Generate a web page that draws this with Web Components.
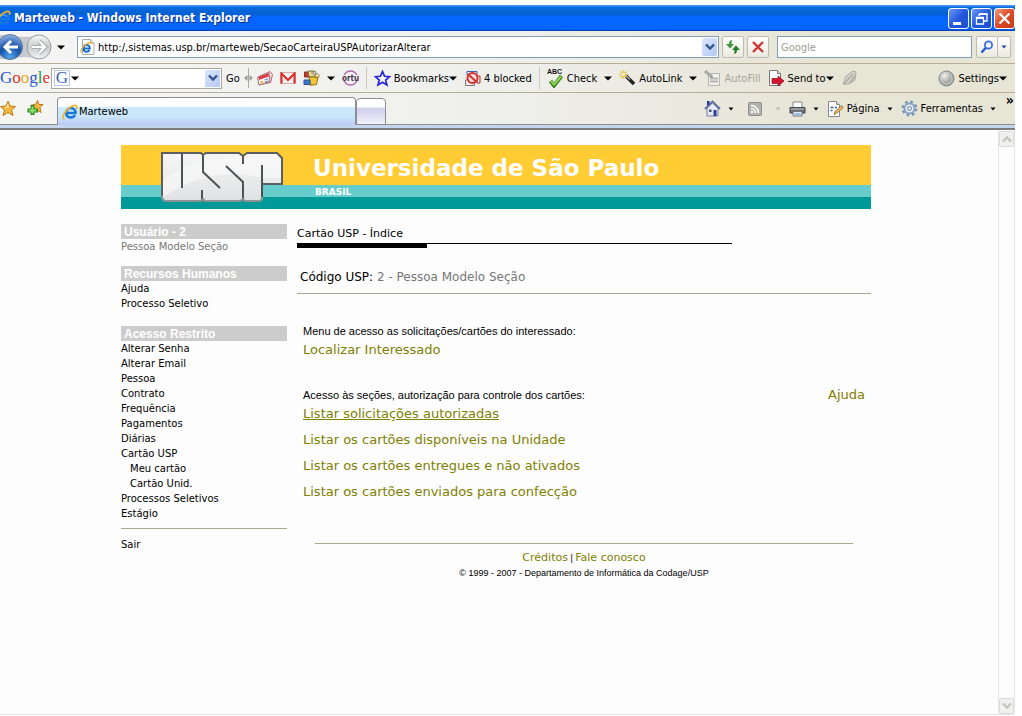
<!DOCTYPE html>
<html lang="pt-BR">
<head>
<meta charset="utf-8">
<title>Marteweb</title>
<style>
  html, body { margin: 0; height: 100%; background: #fff; }
  body { font-family: "DejaVu Sans", Verdana, sans-serif; font-size: 10px; color: #000; }
</style>
</head>
<body>
<browser-window>
  <window-title slot="title">Marteweb - Windows Internet Explorer</window-title>
  <address-bar slot="bars"></address-bar>
  <google-toolbar slot="bars"></google-toolbar>
  <tab-bar slot="bars">Marteweb</tab-bar>
  <usp-page></usp-page>
</browser-window>

<script>
const ICONS = {
  ie: [16, 16, `<path d="M4 9h9.500c.4-6.500-9.300-6.500-9.300 0 0 5.500 7 5.500 8.800 2" fill="none" stroke="#1a78dc" stroke-width="2.600"/><path d="M5.500 6.800c1-2 5-2.200 6 0" fill="none" stroke="#7cc4f8" stroke-width=".8"/><path d="M2.600 15C-1.800 14.500 4 4.500 11 1.800c3-1 4.600.4 3.300 3" fill="none" stroke="#edb52a" stroke-width="1.700"/>`],
  pageie: [16, 16, `<path d="M2.500.5h8l3.500 3.500v11.500H2.500z" fill="#fff" stroke="#a9aaa8"/><path d="M10.500.5v3.500h3.500" fill="#ddd" stroke="#a9aaa8"/><path d="M3.500 9.500h6.300c.3-4.600-6.300-4.600-6.300 0 0 4 4.800 4 6 1.500" fill="none" stroke="#1c6fd0" stroke-width="2"/><path d="M1.500 13.600C-.8 12 4 5 9.500 3.600c1.500-.4 2 .4 1.500 1.400" fill="none" stroke="#e9b32a" stroke-width="1.300"/>`],
  nav: [52, 28, `<defs><radialGradient id="b" cx=".5" cy=".9" r=".9"><stop offset="0" stop-color="#4fa6ee"/><stop offset=".5" stop-color="#1750a8"/><stop offset="1" stop-color="#8fb4e2"/></radialGradient><linearGradient id="g" x2="0" y2="1"><stop offset="0" stop-color="#fafafa"/><stop offset=".5" stop-color="#c9cbcc"/><stop offset="1" stop-color="#f2f2f2"/></linearGradient></defs><path d="M0 2h12q12 4 26 0v24q-14-4-26 0H0z" fill="#c5c9cf"/><circle cx="10" cy="14" r="12.500" fill="url(#b)" stroke="#69788e"/><circle cx="39" cy="14" r="12" fill="url(#g)" stroke="#979b9f"/><path d="M11 8l-6 6 6 6M5 14h13" fill="none" stroke="#fff" stroke-width="3"/><path d="M39 8l6 6-6 6M45 14H32" fill="none" stroke="#8e9090" stroke-width="4"/><path d="M39 8l6 6-6 6M45 14H32" fill="none" stroke="#fff" stroke-width="2.500"/>`],
  down: [8, 5, `<path d="M0 .5h8L4 4.500z" fill="currentColor"/>`],
  downs: [6, 4, `<path d="M.5.500h5L3 3.500z" fill="currentColor"/>`],
  chev: [10, 8, `<path d="M1 1.500l4 4 4-4" fill="none" stroke="currentColor" stroke-width="2.400"/>`],
  chevup: [10, 8, `<path d="M1 6.500l4-4 4 4" fill="none" stroke="currentColor" stroke-width="2.400"/>`],
  refresh: [16, 16, `<path d="M7 1C4.500 1.500 4 3 4 5H1l4 4.500L9 5H6.500c0-1.500 0-2.500.5-4z" fill="#3d963d"/><path d="M9 15c2.500-.5 3-2 3-4h3l-4-4.500L7 11h2.500c0 1.500 0 2.500-.5 4z" fill="#237c25"/>`],
  stop: [14, 14, `<path d="M2 2l10 10M12 2L2 12" stroke="#cf3434" stroke-width="2.400"/>`],
  search: [14, 14, `<path d="M1.500 12.500l5-5.500" stroke="#2459c5" stroke-width="2.400"/><circle cx="8.500" cy="5" r="3.600" fill="#eef6ff" stroke="#3b70d8" stroke-width="1.800"/>`],
  min: [19, 19, `<path d="M4 13h8v3H4z" fill="#fff"/>`],
  restore: [19, 19, `<path d="M7 5h8v7h-3M7 5v2M4.500 8.500h7v6.500h-7z" fill="none" stroke="#fff" stroke-width="1.300"/><path d="M4 8h8v2H4zM7 4.500h8.500v1.500H7z" fill="#fff"/>`],
  close: [19, 19, `<path d="M4.500 4.500l10 10M14.500 4.500l-10 10" stroke="#fff" stroke-width="2.300"/>`],
  grip: [9, 20, `<path d="M4.500 0v20" stroke="#aaa"/><path d="M3.500 7v6L0 10zM5.500 7v6L9 10z" fill="#999"/>`],
  news: [17, 16, `<path d="M2 7L14 1.500l2.500 3-2 8L3 15z" fill="#f3dfdf" stroke="#b6636c"/><path d="M1.500 7.500L13 3l1 8.500L3 15z" fill="#fff" stroke="#a27478"/><path d="M2.500 7l10-3.500.5 3-10 3.500z" fill="#db3e44"/><path d="M4 11.500l3-1 .5 2-3 1z" fill="#e8b53a"/><path d="M8.500 10l4-1.300M9 12l3.500-1.200" stroke="#5b78c0"/>`],
  gmail: [16, 12, `<path d="M.5.500h15v11H.5z" fill="#f8f4f2" stroke="#d8a8a2"/><path d="M1 11l5.500-6M15 11L9.500 5" stroke="#d9c4c0"/><path d="M1.500 11.500V1.500L8 8l6.500-6.500v10" fill="none" stroke="#d42e2a" stroke-width="2"/>`],
  gadgets: [17, 16, `<path d="M1.500 2h5v5h-5z" fill="#d23b2d" stroke="#7d3428"/><path d="M5 1h6l2 2-2 4H6z" fill="#ebdd92" stroke="#80733a"/><path d="M9 1l1.500 2 2-2 .5 3H9z" fill="#fff" stroke="#555" stroke-width=".6"/><path d="M6 7h9l-1.500 7.500-6 .8z" fill="#f2c62e" stroke="#8c6d1a"/><circle cx="14" cy="6" r="2.200" fill="none" stroke="#a58524"/><path d="M1 10h6v4.500H1z" fill="#3979cc" stroke="#2a5390"/>`],
  ortu: [17, 16, `<circle cx="8.500" cy="8" r="7" fill="#f5f0f7" stroke="#b26aa9" stroke-width="1.300"/><path d="M0 5h17v6H0z" fill="#f4f1f4"/><text x="8.500" y="11" text-anchor="middle" font-family="DejaVu Sans Condensed, sans-serif" font-size="8" font-weight="bold" fill="#463650">ortu</text>`],
  star: [17, 17, `<path d="M8.500 1.500l2 4.800 5 .4-3.900 3.300 1.300 5-4.400-2.700L4 15l1.300-5L1.500 6.700l5-.4z" fill="#fff" stroke="#2424e0" stroke-width="1.700"/>`],
  blocked: [17, 17, `<path d="M3 1.500h10v3H3z" fill="#d9e7fa" stroke="#3b5ea5"/><path d="M1.500 10h9v5.500h-9z" fill="#f5f1ef" stroke="#777"/><path d="M13 6h3v7h-3z" fill="#f3e6e2" stroke="#a33"/><circle cx="8.500" cy="8" r="5" fill="#fbe4e2" stroke="#d92e2b" stroke-width="2"/><path d="M5 5l7 6.500" stroke="#d92e2b" stroke-width="2"/>`],
  check: [17, 20, `<text x="0" y="6" font-family="Liberation Sans, sans-serif" font-size="7" font-weight="bold" fill="#111">ABC</text><path d="M3.500 13l3.500 4.500L14.500 8" fill="none" stroke="#3a7a1d" stroke-width="4"/><path d="M4 13l3 3.500L14 8.500" fill="none" stroke="#8ed455" stroke-width="2.200"/>`],
  wand: [17, 16, `<path d="M6 5l9 9" stroke="#222" stroke-width="3.600"/><path d="M6 4.500l5 5" stroke="#a5a5a5" stroke-width="1.500"/><path d="M4.500 0v9M0 4.500h9M1.500 1.500l6 6M7.500 1.500l-6 6" stroke="#edbd4b" stroke-width="1.200"/><circle cx="4.500" cy="4.500" r="1.700" fill="#fff5c4"/>`],
  fill: [17, 16, `<path d="M4.500 3.500h11v12h-11z" fill="#f1f1ee" stroke="#b4b4ae"/><path d="M6 8.500h8M6 11.500h8" stroke="#b4b4ae" stroke-width="2"/><path d="M1 1l7 6" stroke="#aaa" stroke-width="3"/><path d="M9 8L6.500 7l1.500-1.800z" fill="#888"/>`],
  send: [17, 16, `<path d="M1.500.5h8l3 3v12h-11z" fill="#fff" stroke="#777"/><path d="M9.500.500v3h3" fill="#ddd" stroke="#777"/><path d="M4 8.500h6V6l6 5-6 5v-2.500H4z" fill="#d5152f" stroke="#8a1020" stroke-width=".7"/>`],
  pen: [17, 16, `<path d="M2 14L5 6 12 1l3 1-1 8-6 4z" fill="#cfcdc4" stroke="#b0aea5"/><path d="M3 14L12 4M9 13l5-7" stroke="#96948c"/>`],
  orb: [17, 17, `<defs><radialGradient id="o" cx=".35" cy=".3"><stop offset="0" stop-color="#f4f4f2"/><stop offset="1" stop-color="#a4a4a0"/></radialGradient></defs><circle cx="8.500" cy="8.500" r="7.500" fill="url(#o)" stroke="#868683"/><circle cx="8.500" cy="8.500" r="5.500" fill="none" stroke="#d0d0cc"/>`],
  fav: [17, 17, `<path d="M8 1l2 5 5.500.5-4 3.500 1.500 5.500-5-3-5 3L4.500 10l-4-3.500L6 6z" fill="#f6b73c" stroke="#b97b1d"/><path d="M8 3l1 4-4 2L6 6.500z" fill="#ffe49a"/>`],
  favadd: [17, 16, `<path d="M10.500.500l1.500 4h4l-3 3 1 5-3.500-2-4 2 1-5-3-2.500 4-.5z" fill="#f6b73c" stroke="#b97b1d"/><path d="M3.500 5h4v3.500H11v4H7.500V15h-4v-2.500H.5v-4h3z" fill="#2f8a24"/><path d="M5.500 6.500v7M2 10.500h7.500" stroke="#8fe070" stroke-width="2"/>`],
  home: [17, 17, `<path d="M3 8v8h11V8L8.500 3z" fill="#e6e9f2" stroke="#77809c"/><path d="M1 9l7.500-7.500L16 9" fill="none" stroke="#606c9b" stroke-width="1.800"/><path d="M3 1h2.500v3L3 6z" fill="#2b2f95"/><path d="M9.500 10h3v6h-3z" fill="#2f3c94"/><path d="M5 9.500h2.500V12H5z" fill="#4b5474"/>`],
  rss: [14, 14, `<rect x=".5" y=".5" width="13" height="13" rx="1.500" fill="#b2b2ae" stroke="#8f8f8b"/><circle cx="4" cy="10" r="1.300" fill="#fff"/><path d="M3 6.500a4.500 4.500 0 0 1 4.500 4.500M3 3.500A7.500 7.500 0 0 1 10.500 11" fill="none" stroke="#fff" stroke-width="1.500"/>`],
  print: [17, 16, `<path d="M4 1h9v6H4z" fill="#fff" stroke="#888"/><path d="M1 6.500h15V12H1z" fill="#6d6f74" stroke="#45464a"/><path d="M2 8h13" stroke="#a9abb0" stroke-width="1.500"/><path d="M4 10.500h9V15H4z" fill="#dbe9fb" stroke="#777"/><path d="M5.500 13h6" stroke="#538bd0"/>`],
  page: [17, 16, `<path d="M1.500.500h8l3 3v12h-11z" fill="#fff" stroke="#888"/><path d="M9.500.500v3h3" fill="#ddd" stroke="#888"/><path d="M3.500 6.500h3M3.500 9.500h2M8 6.500h2" stroke="#3a63b8" stroke-width="1.500"/><path d="M7 13.500l1-3 6.500-6 1.800 2-6.800 6z" fill="#efb65a" stroke="#8c6736" stroke-width=".8"/>`],
  gear: [17, 17, `<circle cx="8.500" cy="8.500" r="6.500" fill="none" stroke="#7b97b6" stroke-width="3" stroke-dasharray="2.600 2.500"/><circle cx="8.500" cy="8.500" r="5" fill="#e6eef7" stroke="#88a3c2" stroke-width="2"/><circle cx="8.500" cy="8.500" r="2" fill="#eceadf" stroke="#6b87a9"/>`],
  usp: [122, 51, `<defs><linearGradient id="m" x2="0" y2="1"><stop offset="0" stop-color="#f6f6f6"/><stop offset="1" stop-color="#e0e1e2"/></linearGradient></defs><path d="M1 1h39l2 2 3-2h33l4 3 4-3h30l5 5v26h-19v13q0 4-3 4H84l-2-2-3 2H44l-2-2-2 2H5q-4 0-4-5z" fill="url(#m)"/><path d="M1 28Q30 6 80 6h40v20h-19q-50-14-100 20z" fill="#fafafa" opacity=".6"/><path d="M21 1v35M42 2v18l17 16M41 38v10M65 14l17 16v18M82 3v9M101 13v32" fill="none" stroke="#4e5355" stroke-width="2"/><path d="M101 32h20V6l-5-5H86l-4 3-4-3H45l-3 2-2-2H1v43" fill="none" stroke="#5a5f60" stroke-width="2"/><path d="M1 44q0 5 4 5h35l2-2 2 2h35l3-2 2 2h14q3 0 3-4" fill="none" stroke="#8b9394" stroke-width="2"/>`]
};

const component = (name, css, html) => {
  const template = document.createElement('template');
  template.innerHTML = `<style>:host{box-sizing:border-box}*{box-sizing:border-box}${css}</style>${html}`;
  customElements.define(name, class extends HTMLElement {
    constructor() {
      super();
      this.attachShadow({ mode: 'open' }).append(template.content.cloneNode(true));
    }
  });
};

customElements.define('ui-icon', class extends HTMLElement {
  constructor() { super(); this.attachShadow({ mode: 'open' }); }
  connectedCallback() {
    const [w, h, art] = ICONS[this.getAttribute('name')];
    this.shadowRoot.innerHTML = `<style>:host{display:block;flex:none}svg{display:block}</style><svg width="${w}" height="${h}" viewBox="0 0 ${w} ${h}" aria-hidden="true">${art}</svg>`;
  }
});

customElements.define('tool-button', class extends HTMLElement {
  constructor() { super(); this.attachShadow({ mode: 'open' }); }
  connectedCallback() {
    const icon = this.getAttribute('icon');
    const arrow = this.getAttribute('arrow');
    const off = this.hasAttribute('disabled');
    this.shadowRoot.innerHTML = `<style>
      :host { display: block; flex: none; }
      button { display: flex; align-items: center; gap: 3px; border: 0; padding: 0; margin: 0; background: none; font: inherit; color: #000; white-space: nowrap; }
      button:disabled { color: #a6a497; }
      .far { margin-left: 4px; }
      .near { margin-left: -3px; }
      .dim { color: #bbb; margin-left: 10px; }
    </style><button type="button" ${off ? 'disabled' : ''} aria-label="${this.getAttribute('label') || this.textContent}">${icon ? `<ui-icon name="${icon}"></ui-icon>` : ''}<slot></slot>${arrow ? `<ui-icon class="${arrow}" name="${this.hasAttribute('small') ? 'downs' : 'down'}"></ui-icon>` : ''}</button>`;
  }
});

component('browser-window', `
  :host { display: flex; flex-direction: column; min-height: 100%; padding: 5px 7px 1px 0; }
  .bars { background: linear-gradient(to right, #f5f5f4, #efefec 50%, #e7e5d6 80%); font: 11px "DejaVu Sans Condensed", Tahoma, sans-serif; }
  .view { flex: 1; display: flex; border-top: 2px solid #7c7c7c; border-bottom: 1px solid #e2e2e2; background: #fdfdfd; }
  .body { flex: 1; min-width: 0; padding-right: 6px; }
`, `<slot name="title"></slot><div class="bars"><slot name="bars"></slot></div>
<div class="view"><div class="body"><slot></slot></div><scroll-track></scroll-track></div>`);

component('window-title', `
  :host { display: flex; align-items: center; height: 26px; color: #fff; background: linear-gradient(#3f95f8 0 1px, #0a6ce0 2px, #0560cf 9px, #0466ff 12px 24px, #0038b0); }
  h1 { flex: 1; margin: 0 0 0 3px; font: bold 12px "DejaVu Sans Condensed", "Trebuchet MS", sans-serif; text-shadow: 1px 1px #0a2f8a; white-space: nowrap; }
  .app { margin-left: -5px; }
  .ctl { display: flex; gap: 2px; }
  button { width: 21px; height: 21px; padding: 0; border: 1px solid #fff; border-radius: 3px; background: linear-gradient(135deg, #6f9bf5, #2358dd 50%, #1d4fd0); }
  button.close { background: linear-gradient(135deg, #f09a80, #dd4a26 50%, #c33a15); }
`, `<ui-icon class="app" name="ie"></ui-icon><h1><slot></slot></h1>
<div class="ctl"><button type="button" aria-label="Minimizar"><ui-icon name="min"></ui-icon></button><button type="button" aria-label="Restaurar"><ui-icon name="restore"></ui-icon></button><button class="close" type="button" aria-label="Fechar"><ui-icon name="close"></ui-icon></button></div>`);

component('address-bar', `
  :host { display: flex; align-items: center; height: 33px; padding-right: 4px; border-bottom: 1px solid #b9ad98; }
  .hist { margin: 0 12px 0 5px; }
  .box { display: flex; align-items: center; height: 22px; border: 1px solid #7f9db9; background: #fff; }
  .url { flex: 1; padding: 0 1px 0 2px; gap: 2px; }
  input { flex: 1; min-width: 0; border: 0; padding: 0; outline: 0; background: none; font: inherit; color: #000; }
  input::placeholder { color: #a09e92; opacity: 1; }
  button { display: flex; align-items: center; justify-content: center; padding: 0; height: 22px; border: 1px solid #bdbcb2; border-radius: 2px; background: linear-gradient(#fff, #eceade); }
  .drop { width: 15px; height: 18px; border: 0; background: linear-gradient(135deg, #dce7fd, #b4c8f5); color: #35538f; }
  .sq { width: 22px; margin-left: 3px; }
  .find { width: 195px; margin: 0 4px 0 8px; padding-left: 3px; }
  .go { width: 22px; } .more { width: 14px; margin-left: -1px; color: #234aa0; }
`, `<ui-icon name="nav"></ui-icon><ui-icon class="hist" name="down"></ui-icon>
<div class="box url"><ui-icon name="pageie"></ui-icon><input aria-label="Endereço" value="http:/,sistemas.usp.br/marteweb/SecaoCarteiraUSPAutorizarAlterar"><button class="drop" type="button" aria-label="Endereços"><ui-icon name="chev"></ui-icon></button></div>
<button class="sq" type="button" aria-label="Atualizar"><ui-icon name="refresh"></ui-icon></button>
<button class="sq" type="button" aria-label="Parar"><ui-icon name="stop"></ui-icon></button>
<div class="box find"><input aria-label="Pesquisar" placeholder="Google"></div>
<button class="go" type="button" aria-label="Buscar"><ui-icon name="search"></ui-icon></button><button class="more" type="button" aria-label="Opções de busca"><ui-icon name="downs"></ui-icon></button>`);

component('google-toolbar', `
  :host { display: flex; align-items: center; height: 29px; padding-right: 8px; border-bottom: 1px solid #b9ad98; white-space: nowrap; }
  .logo { width: 51px; font: 17px "Liberation Serif", serif; color: #2a5bd0; }
  .logo .r { color: #d6322b; } .logo .y { color: #e3a81b; } .logo .g { color: #249a3c; }
  .box { display: flex; align-items: center; width: 171px; height: 21px; padding: 0 1px 0 2px; border: 1px solid #a8a89c; background: #fff; gap: 1px; }
  .g0 { display: block; width: 16px; height: 16px; border: 1px solid #b9c6e4; font: 17px/14px "Liberation Serif", serif; text-align: center; color: #3a5ec0; }
  input { flex: 1; min-width: 0; border: 0; padding: 0; outline: 0; font: inherit; background: none; }
  .drop { display: flex; align-items: center; justify-content: center; width: 15px; height: 17px; padding: 0; border: 0; background: linear-gradient(135deg, #dce7fd, #b4c8f5); color: #35538f; }
  .items { flex: 1; display: flex; align-items: center; gap: 7px; margin-left: 4px; }
  .grip { margin: 0 -4px 0 -3px; }
  i { width: 1px; height: 22px; background: #cbc8b8; }
  .push { margin-left: auto; }
`, `<span class="logo">G<span class="r">o</span><span class="y">o</span>g<span class="g">l</span><span class="r">e</span></span>
<div class="box"><span class="g0">G</span><ui-icon name="down"></ui-icon><input aria-label="Pesquisa Google"><button class="drop" type="button" aria-label="Histórico"><ui-icon name="chev"></ui-icon></button></div>
<div class="items">
<tool-button>Go</tool-button><ui-icon class="grip" name="grip"></ui-icon>
<tool-button icon="news" label="Notícias"></tool-button><tool-button icon="gmail" label="Gmail"></tool-button><tool-button icon="gadgets" arrow="far" label="Gadgets"></tool-button><tool-button icon="ortu" label="Orkut"></tool-button><i></i>
<tool-button icon="star" arrow="near">Bookmarks</tool-button><tool-button icon="blocked">4 blocked</tool-button><i></i>
<tool-button icon="check" arrow="far">Check</tool-button><tool-button icon="wand" arrow="far">AutoLink</tool-button><tool-button icon="fill" disabled>AutoFill</tool-button><tool-button icon="send" arrow="near">Send to</tool-button><tool-button icon="pen" disabled label="Destacar"></tool-button><tool-button class="push" icon="orb" arrow="near">Settings</tool-button>
</div>`);

component('tab-bar', `
  :host { display: flex; height: 35px; background: linear-gradient(transparent 31px, #8e8e8a 31px 32px, #c3d6ee 32px); }
  .fav { display: flex; width: 57px; padding-top: 7px; gap: 10px; }
  .tab { display: flex; align-items: center; gap: 1px; width: 299px; height: 28px; margin-top: 4px; padding-left: 4px; border: 1px solid #8c8c94; border-bottom: 0; border-radius: 4px 4px 0 0; background: linear-gradient(#fff 0 8px, #cbe8fb 10px 18px, #bccaf6); font: inherit; }
  .new { width: 30px; height: 27px; margin-top: 5px; border: 1px solid #8c8c94; border-radius: 4px 4px 0 0; background: linear-gradient(#fff 0 8px, #d3d2ee 9px 12px, #f2f2f7); }
  .tools { margin-left: auto; display: flex; align-items: center; height: 31px; gap: 8px; padding-right: 10px; }
  .wide { margin-right: 6px; }
  .over { height: 14px; padding: 0; margin-right: 1px; border: 0; background: none; font: bold 14px/14px "DejaVu Sans Condensed", sans-serif; }
`, `<div class="fav"><tool-button icon="fav" label="Favoritos"></tool-button><tool-button icon="favadd" label="Adicionar"></tool-button></div>
<button class="tab" type="button"><ui-icon name="ie"></ui-icon><slot></slot></button><button class="new" type="button" aria-label="Nova guia"></button>
<div class="tools"><tool-button class="wide" icon="home" arrow="far" small label="Início"></tool-button><tool-button icon="rss" arrow="dim" small disabled label="Feeds"></tool-button><tool-button icon="print" arrow="far" small label="Imprimir"></tool-button><tool-button icon="page" arrow="far" small>Página</tool-button><tool-button icon="gear" arrow="far" small>Ferramentas</tool-button></div><button class="over" type="button" aria-label="Mais">»</button>`);

component('scroll-track', `
  :host { display: flex; flex-direction: column; justify-content: space-between; width: 17px; padding: 1px 0 0; border: 1px solid #e6e6e6; border-width: 0 1px; background: #fdfdfd; }
  button { display: flex; align-items: center; justify-content: center; width: 15px; height: 16px; padding: 0; border: 1px solid #dcdcdc; border-radius: 2px; background: #f0f0ee; color: #c4c4c2; }
`, `<button type="button" disabled aria-label="Rolar para cima"><ui-icon name="chevup"></ui-icon></button><button type="button" disabled aria-label="Rolar para baixo"><ui-icon name="chev"></ui-icon></button>`);

component('usp-banner', `
  :host { display: flex; height: 64px; padding-left: 40px; color: #fff; background: linear-gradient(#fc3 0 40px, #6cc 40px 52px, #099 52px); }
  .logo { margin: 7px 30px 0 0; }
  h2 { margin: 4px 0 0; font: bold 23px/38px "DejaVu Sans", Verdana, sans-serif; white-space: nowrap; }
  p { margin: 0 0 0 2px; font: bold 9px/10px "DejaVu Sans", Verdana, sans-serif; }
`, `<ui-icon class="logo" name="usp"></ui-icon><div><h2>Universidade de São Paulo</h2><p>BRASIL</p></div>`);

component('menu-section', `
  :host { display: block; font-size: 10px; line-height: 15px; }
  h3 { margin: 0; padding-left: 3px; height: 15px; background: #ccc; color: #fff; font: bold 12px/16px "Liberation Sans", Arial, sans-serif; }
  ::slotted(a) { display: block; color: #000; text-decoration: none; }
  ::slotted(a.sub) { padding-left: 9px; }
  ::slotted(span:not([slot])) { display: block; color: #777; }
`, `<h3><slot name="heading"></slot></h3><slot></slot>`);

component('side-menu', `
  :host { display: block; width: 166px; flex: none; }
  menu-section { margin-bottom: 15px; }
  menu-section.user { margin-bottom: 12px; }
  menu-section.last { margin-bottom: 7px; }
  hr { margin: 0 0 8px; border: 0; border-top: 1px solid #a9a98d; }
  .out { display: block; font-size: 10px; line-height: 15px; color: #000; text-decoration: none; }
`, `<menu-section class="user"><span slot="heading">Usuário - 2</span><span>Pessoa Modelo Seção</span></menu-section>
<menu-section><span slot="heading">Recursos Humanos</span><a href="#">Ajuda</a><a href="#">Processo Seletivo</a></menu-section>
<menu-section class="last"><span slot="heading">Acesso Restrito</span><a href="#">Alterar Senha</a><a href="#">Alterar Email</a><a href="#">Pessoa</a><a href="#">Contrato</a><a href="#">Frequência</a><a href="#">Pagamentos</a><a href="#">Diárias</a><a href="#">Cartão USP</a><a class="sub" href="#">Meu cartão</a><a class="sub" href="#">Cartão Unid.</a><a href="#">Processos Seletivos</a><a href="#">Estágio</a></menu-section>
<hr><a class="out" href="#">Sair</a>`);

component('card-index', `
  :host { display: block; flex: 1; min-width: 0; }
  h2 { margin: 0; padding: 2px 0; font: 11px/15px "DejaVu Sans", Verdana, sans-serif; }
  .rule { width: 435px; max-width: 100%; border-top: 1px solid #000; }
  .rule::before { content: ""; display: block; width: 130px; height: 4px; background: #000; }
  .who { margin: 20px 0 7px; padding-left: 3px; font-size: 12px; line-height: 18px; }
  .who span { color: #777; }
  .line { margin: 0; border: 0; border-top: 1px solid #a9a98d; }
  section { padding: 0 6px; }
  .one { margin-top: 27px; } .two { margin-top: 25px; }
  .row { display: flex; justify-content: space-between; align-items: center; height: 19px; }
  .note { margin: 0; font: 11px/16px "Liberation Sans", Arial, sans-serif; }
  a { color: #808000; text-decoration: none; font-size: 13px; line-height: 20px; }
  ul { margin: 0; padding: 0; list-style: none; }
  li { height: 26px; }
  .on { text-decoration: underline; }
`, `<h2>Cartão USP - Índice</h2><div class="rule"></div>
<p class="who">Código USP: <span>2 - Pessoa Modelo Seção</span></p><hr class="line">
<section class="one"><div class="row"><p class="note">Menu de acesso as solicitações/cartões do interessado:</p></div><a href="#">Localizar Interessado</a></section>
<section class="two"><div class="row"><p class="note">Acesso às seções, autorização para controle dos cartões:</p><a href="#">Ajuda</a></div>
<ul><li><a class="on" href="#">Listar solicitações autorizadas</a></li><li><a href="#">Listar os cartões disponíveis na Unidade</a></li><li><a href="#">Listar os cartões entregues e não ativados</a></li><li><a href="#">Listar os cartões enviados para confecção</a></li></ul></section>
<page-footer></page-footer>`);

component('page-footer', `
  :host { display: block; margin: 35px 18px 0; padding-top: 6px; border-top: 1px solid #a9a98d; text-align: center; font: 9px/15px "Liberation Sans", Arial, sans-serif; }
  p { margin: 0; }
  a { color: #808000; text-decoration: none; font: 11px/16px "DejaVu Sans", Verdana, sans-serif; }
`, `<p><a href="#">Créditos</a> | <a href="#">Fale conosco</a></p><p>© 1999 - 2007 - Departamento de Informática da Codage/USP</p>`);

component('usp-page', `
  :host { display: block; max-width: 750px; margin: 0 auto; padding-top: 15px; }
  main { display: flex; gap: 10px; margin-top: 15px; }
`, `<usp-banner></usp-banner><main><side-menu></side-menu><card-index></card-index></main>`);
</script>
</body>
</html>
